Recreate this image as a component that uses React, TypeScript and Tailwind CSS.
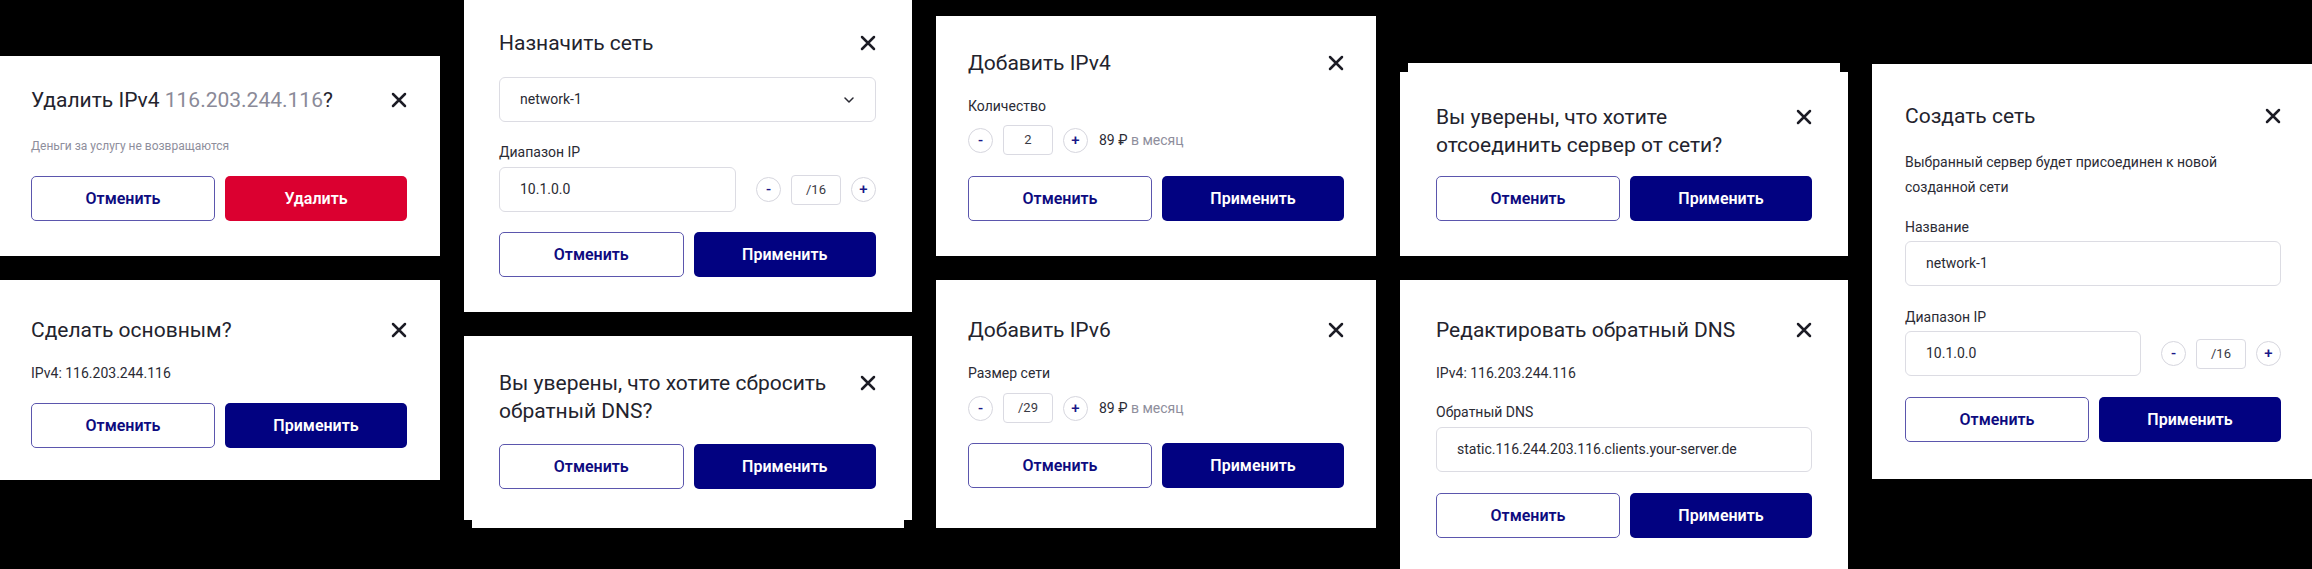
import React from "react";
import { clsx } from "clsx";

function CloseIcon() {
  return (
    <svg
      viewBox="0 0 16 16"
      className="h-[16px] w-[16px] shrink-0 text-[#1c1c25]"
      fill="none"
      stroke="currentColor"
      strokeWidth={2.5}
      strokeLinecap="round"
    >
      <path d="M2 2L14 14M14 2L2 14" />
    </svg>
  );
}

function Header({ children, titleClass }: { children: React.ReactNode; titleClass?: string }) {
  return (
    <div className="flex items-start justify-between gap-6">
      <h2 className={clsx("text-[21px] leading-[28px] text-[#23232d]", titleClass)}>{children}</h2>
      <div className="flex h-[28px] items-center">
        <CloseIcon />
      </div>
    </div>
  );
}

function Actions({
  confirm = "Применить",
  danger = false,
  className,
}: {
  confirm?: string;
  danger?: boolean;
  className?: string;
}) {
  return (
    <div className={clsx("flex gap-[10px]", className)}>
      <button className="h-[45px] flex-1 rounded-[5px] border border-[#5b56ad] bg-white text-[16px] font-semibold text-[#0e0b7f]">
        Отменить
      </button>
      <button
        className={clsx(
          "h-[45px] flex-1 rounded-[5px] text-[16px] font-semibold text-white",
          danger ? "bg-[#db0030]" : "bg-[#020281]"
        )}
      >
        {confirm}
      </button>
    </div>
  );
}

function Label({ children, className }: { children: React.ReactNode; className?: string }) {
  return <div className={clsx("text-[14px] leading-5 text-[#2b2b35]", className)}>{children}</div>;
}

function Field({ value, className }: { value: string; className?: string }) {
  return (
    <div
      className={clsx(
        "flex h-[45px] items-center rounded-[6px] border border-[#dcdce3] bg-white px-5 text-[14px] text-[#2a2a33]",
        className
      )}
    >
      {value}
    </div>
  );
}

function Circle({ children }: { children: React.ReactNode }) {
  return (
    <div className="flex h-[25px] w-[25px] shrink-0 items-center justify-center rounded-full border border-[#d6d6de] text-[15px] font-medium leading-none text-[#1a1788]">
      {children}
    </div>
  );
}

function Stepper({ value }: { value: string }) {
  return (
    <div className="flex items-center gap-[10px]">
      <Circle>-</Circle>
      <div className="flex h-[30px] w-[50px] items-center justify-center rounded-[4px] border border-[#dadae2] text-[13px] text-[#3a3a44]">
        {value}
      </div>
      <Circle>+</Circle>
    </div>
  );
}

function RangeRow({ className }: { className?: string }) {
  return (
    <div className={clsx("flex items-center gap-5", className)}>
      <Field value="10.1.0.0" className="flex-1" />
      <Stepper value="/16" />
    </div>
  );
}

function Price() {
  return (
    <span className="text-[14px] text-[#2b2b35]">
      89 ₽ <span className="text-[#8e8e9c]">в месяц</span>
    </span>
  );
}

export default function App() {
  return (
    <div className="relative h-[569px] w-[2312px] overflow-hidden bg-black font-['Roboto','Noto_Sans',sans-serif]">
      {/* delete ipv4 */}
      <div className="absolute left-0 top-[56px] flex h-[200px] w-[440px] flex-col bg-white pl-[31px] pr-[33px] pt-[30px]">
        <Header>
          Удалить IPv4 <span className="text-[#8a8a98]">116.203.244.116</span>?
        </Header>
        <p className="mt-[24px] text-[12px] leading-4 text-[#8e8e9c]">Деньги за услугу не возвращаются</p>
        <Actions danger confirm="Удалить" className="mt-[22px]" />
      </div>

      {/* make primary */}
      <div className="absolute left-0 top-[280px] flex h-[200px] w-[440px] flex-col bg-white pl-[31px] pr-[33px] pt-[36px]">
        <Header>Сделать основным?</Header>
        <Label className="mt-[19px]">IPv4: 116.203.244.116</Label>
        <Actions className="mt-[20px]" />
      </div>

      {/* assign network */}
      <div className="absolute left-[464px] top-0 flex h-[312px] w-[448px] flex-col bg-white pl-[35px] pr-[36px] pt-[29px]">
        <Header>Назначить сеть</Header>
        <div className="mt-[20px] flex h-[45px] items-center justify-between rounded-[6px] border border-[#dcdce3] pl-5 pr-[21px] text-[14px] text-[#2a2a33]">
          network-1
          <svg viewBox="0 0 10 6" className="h-[6px] w-[10px]" fill="none" stroke="#2a2a33" strokeWidth={1.5} strokeLinecap="round" strokeLinejoin="round">
            <path d="M1 1L5 5L9 1" />
          </svg>
        </div>
        <Label className="mt-[20px]">Диапазон IP</Label>
        <RangeRow className="mt-[5px]" />
        <Actions className="mt-[20px]" />
      </div>

      {/* reset dns */}
      <div className="absolute left-[472px] top-[520px] h-[8px] w-[432px] bg-white" />
      <div className="absolute left-[464px] top-[336px] flex h-[184px] w-[448px] flex-col bg-white pl-[35px] pr-[36px] pt-[33px]">
        <Header titleClass="max-w-[330px]">Вы уверены, что хотите сбросить обратный DNS?</Header>
        <Actions className="mt-[19px]" />
      </div>

      {/* add ipv4 */}
      <div className="absolute left-[936px] top-[16px] flex h-[240px] w-[440px] flex-col bg-white px-8 pt-[33px]">
        <Header>Добавить IPv4</Header>
        <Label className="mt-[19px]">Количество</Label>
        <div className="mt-[9px] flex items-center gap-[11px]">
          <Stepper value="2" />
          <Price />
        </div>
        <Actions className="mt-[21px]" />
      </div>

      {/* add ipv6 */}
      <div className="absolute left-[936px] top-[280px] flex h-[248px] w-[440px] flex-col bg-white px-8 pt-[36px]">
        <Header>Добавить IPv6</Header>
        <Label className="mt-[19px]">Размер сети</Label>
        <div className="mt-[10px] flex items-center gap-[11px]">
          <Stepper value="/29" />
          <Price />
        </div>
        <Actions className="mt-[20px]" />
      </div>

      {/* disconnect */}
      <div className="absolute left-[1408px] top-[63px] h-[9px] w-[432px] bg-white" />
      <div className="absolute left-[1400px] top-[72px] flex h-[184px] w-[448px] flex-col bg-white px-[36px] pt-[31px]">
        <Header titleClass="max-w-[290px]">Вы уверены, что хотите отсоединить сервер от сети?</Header>
        <Actions className="mt-[17px]" />
      </div>

      {/* edit reverse dns */}
      <div className="absolute left-[1400px] top-[280px] flex h-[289px] w-[448px] flex-col bg-white px-[36px] pt-[36px]">
        <Header>Редактировать обратный DNS</Header>
        <Label className="mt-[19px]">IPv4: 116.203.244.116</Label>
        <Label className="mt-[19px]">Обратный DNS</Label>
        <Field value="static.116.244.203.116.clients.your-server.de" className="mt-[5px] h-[44px]" />
        <Actions className="mt-[21px]" />
      </div>

      {/* create network */}
      <div className="absolute left-[1872px] top-[64px] flex h-[415px] w-[440px] flex-col bg-white pl-[33px] pr-[31px] pt-[38px]">
        <Header>Создать сеть</Header>
        <p className="mt-[20px] text-[14px] leading-[25px] text-[#2b2b35]">
          Выбранный сервер будет присоединен к новой созданной сети
        </p>
        <Label className="mt-[17px]">Название</Label>
        <Field value="network-1" className="mt-[4px]" />
        <Label className="mt-[21px]">Диапазон IP</Label>
        <RangeRow className="mt-[4px]" />
        <Actions className="mt-[21px]" />
      </div>
    </div>
  );
}
